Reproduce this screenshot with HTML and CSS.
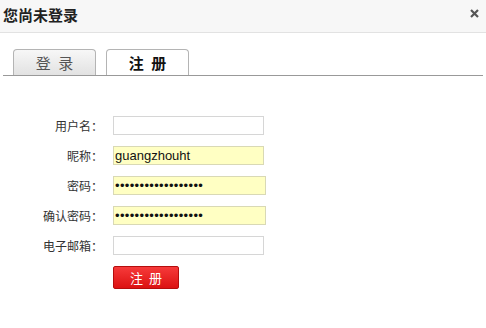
FILE: index.html
```html
<!DOCTYPE html>
<html lang="zh-CN">
<head>
<meta charset="utf-8">
<title>您尚未登录</title>
<link rel="stylesheet" href="styles.css">
</head>
<body>
<div class="dialog">
  <div class="header">
    <h1 class="title">您尚未登录</h1>
    <span class="close" aria-label="关闭">
      <svg width="9" height="9" viewBox="0 0 9 9"><path d="M1 1 L8 8 M8 1 L1 8" stroke="#555" stroke-width="2.2" fill="none"/></svg>
    </span>
  </div>
  <div class="tabs">
    <div class="tab">登 录</div>
    <div class="tab active">注 册</div>
  </div>
  <form class="form">
    <label class="label">用户名：</label>
    <div class="field"><input class="input" type="text"></div>
    <label class="label">昵称：</label>
    <div class="field"><input class="input filled" type="text" value="guangzhouht"></div>
    <label class="label">密码：</label>
    <div class="field"><input class="input filled wide" type="password" value="abcdefghijklmnopqr"></div>
    <label class="label">确认密码：</label>
    <div class="field"><input class="input filled wide" type="password" value="abcdefghijklmnopqr"></div>
    <label class="label">电子邮箱：</label>
    <div class="field"><input class="input" type="text"></div>
    <span></span>
    <div class="field"><button class="submit" type="button">注 册</button></div>
  </form>
</div>
</body>
</html>
```
FILE: styles.css
```css
html, body {
  margin: 0;
  padding: 0;
  background: #fff;
}
body {
  font-family: "Noto Sans CJK SC", "Liberation Sans", sans-serif;
  color: #333;
}
.dialog {
  width: 486px;
}
.header {
  height: 32px;
  background: #f7f7f7;
  border-bottom: 1px solid #e2e2e2;
  display: flex;
  align-items: center;
  justify-content: space-between;
  padding: 0 5px 0 3px;
}
.title {
  margin: 0;
  font-size: 15px;
  font-weight: bold;
  color: #222;
  line-height: 20px;
  position: relative;
  top: -1px;
}
.close {
  display: flex;
  position: relative;
  top: -3px;
  left: -2px;
}
.tabs {
  margin: 16px 3px 0 3px;
  padding-left: 10px;
  border-bottom: 1px solid #999;
  display: flex;
  gap: 10px;
}
.tab {
  width: 81px;
  height: 25px;
  border: 1px solid #b4b4b4;
  border-bottom: none;
  border-radius: 4px 4px 0 0;
  background: linear-gradient(#f7f7f7, #e2e2e2);
  color: #555;
  font-size: 15px;
  line-height: 25px;
  text-align: center;
  word-spacing: 4px;
}
.tab.active {
  background: #fff;
  color: #111;
  font-weight: bold;
}
.form {
  margin: 40px 0 0 0;
  display: grid;
  grid-template-columns: 103px auto;
  column-gap: 10px;
  row-gap: 11px;
  align-items: center;
}
.label {
  font-size: 12px;
  text-align: right;
  color: #333;
  line-height: 19px;
}
.field {
  display: flex;
}
.input {
  box-sizing: border-box;
  width: 151px;
  height: 19px;
  margin: 0;
  padding: 0 1px;
  border: 1px solid #d6d6d6;
  background: #fff;
  font-family: "Liberation Sans", Arial, sans-serif;
  font-size: 13px;
  color: #111;
  outline: none;
}
.input.filled {
  background: #ffffc3;
  border-color: #d9d9b5;
}
.input.wide {
  width: 153px;
  font-size: 13px;
  letter-spacing: 0.35px;
}
.submit {
  box-sizing: border-box;
  width: 66px;
  height: 23px;
  margin: 0;
  padding: 0;
  border: 1px solid #b50d0d;
  border-radius: 2px;
  background: linear-gradient(#f63a3a, #dc1212);
  color: #fff;
  font-family: "Noto Sans CJK SC", sans-serif;
  font-size: 13px;
  line-height: 21px;
  word-spacing: 3px;
}
```
